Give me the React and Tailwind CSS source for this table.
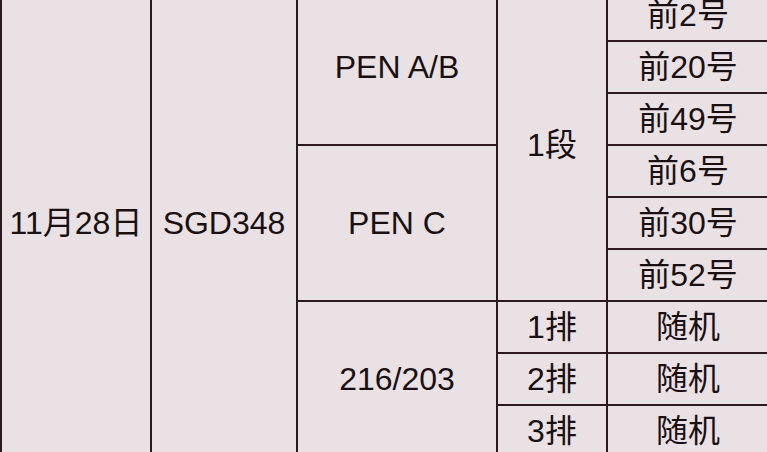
const font = {
  fontFamily: '"Liberation Sans", Arial, "Noto Sans CJK SC", sans-serif',
};

const rankRows = ["前2号", "前20号", "前49号", "前6号", "前30号", "前52号"];
const seatRows = ["1排", "2排", "3排"];

const Cell = ({ className = "", children }) => (
  <div
    className={`flex items-center justify-center bg-[#e9e1e4] text-[32px] leading-none text-[#1a1012] ${className}`}
  >
    {children}
  </div>
);

export default function App() {
  return (
    <div className="h-[452px] w-[767px] overflow-hidden bg-[#e9e1e4]" style={font}>
      <div className="-mt-[12px] grid w-[770px] grid-cols-[148px_144px_198px_108px_160px] grid-rows-[repeat(9,50px)] gap-[2px] border-2 border-[#281a1d] bg-[#281a1d]">
        <Cell className="col-start-1 row-span-9 row-start-1">11月28日</Cell>
        <Cell className="col-start-2 row-span-9 row-start-1">SGD348</Cell>
        <Cell className="col-start-3 row-span-3 row-start-1">PEN A/B</Cell>
        <Cell className="col-start-3 row-span-3 row-start-4">PEN C</Cell>
        <Cell className="col-start-3 row-span-3 row-start-7">216/203</Cell>
        <Cell className="col-start-4 row-span-6 row-start-1">1段</Cell>
        {rankRows.map((label) => (
          <Cell key={label} className="col-start-5">
            {label}
          </Cell>
        ))}
        {seatRows.map((label) => (
          <div key={label} className="contents">
            <Cell className="col-start-4">{label}</Cell>
            <Cell className="col-start-5">随机</Cell>
          </div>
        ))}
      </div>
    </div>
  );
}
